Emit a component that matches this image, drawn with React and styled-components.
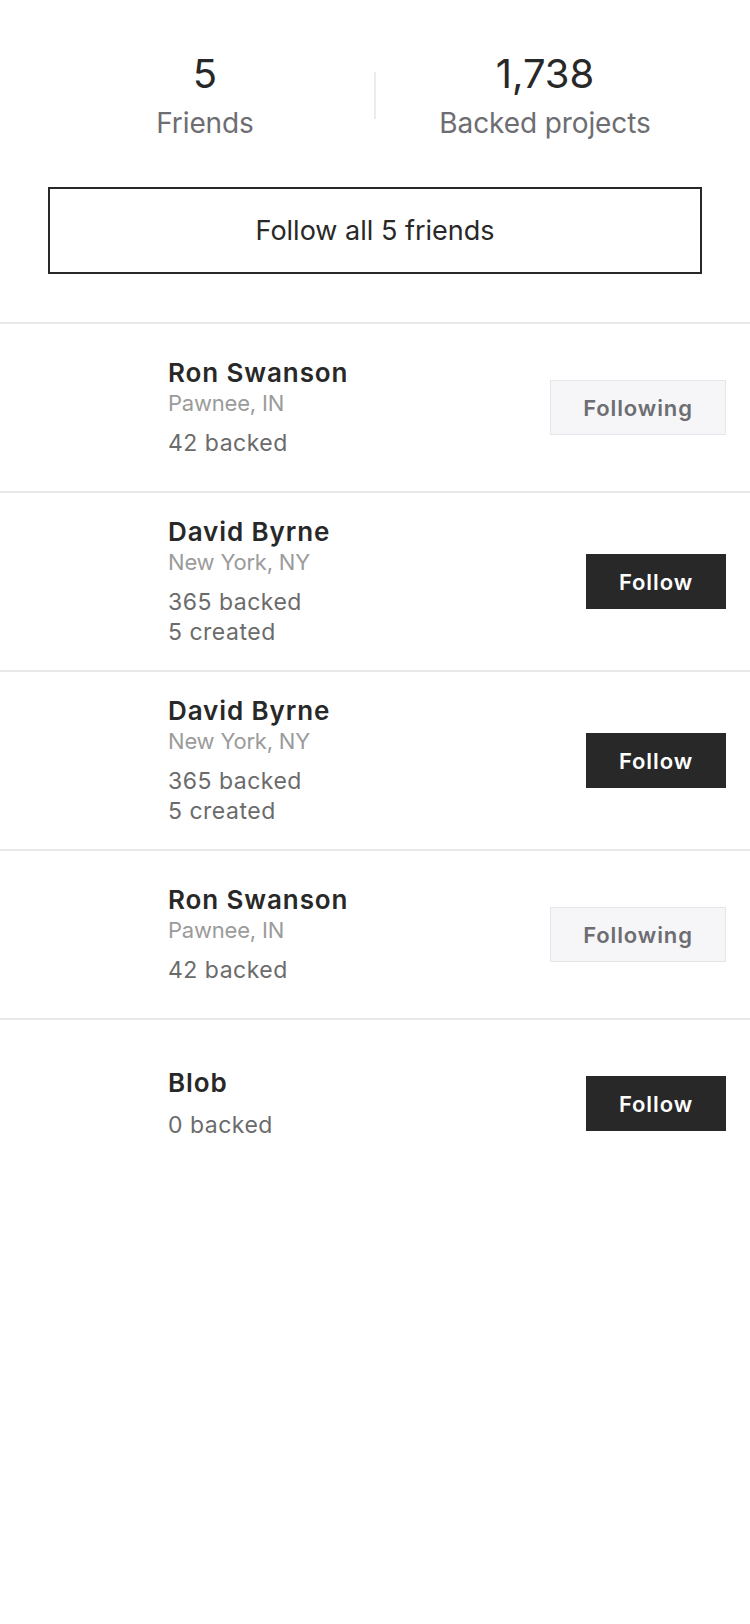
import React from 'react';
import styled, { createGlobalStyle } from 'styled-components';

const GlobalStyle = createGlobalStyle`
  html, body {
    margin: 0;
    padding: 0;
    background: #ffffff;
  }
  body {
    font-family: Inter, "Noto Sans", "Liberation Sans", sans-serif;
    -webkit-font-smoothing: antialiased;
  }
`;

const Page = styled.div`
  width: 750px;
  min-height: 1624px;
  background: #ffffff;
`;

const Header = styled.div`
  padding: 50px 48px 48px;
  border-bottom: 2px solid #e8e8e8;
`;

const StatsRow = styled.div`
  display: flex;
  align-items: center;
  margin: 0 -12px;
`;

const Stat = styled.div`
  flex: 1;
  display: flex;
  flex-direction: column;
  align-items: center;
`;

const StatNumber = styled.div`
  font-size: 40px;
  line-height: 48px;
  font-weight: 400;
  color: #282828;
`;

const StatLabel = styled.div`
  margin-top: 8px;
  font-size: 28px;
  line-height: 34px;
  letter-spacing: -0.1px;
  color: #6d6d72;
`;

const Divider = styled.div`
  width: 2px;
  height: 47px;
  background: #ececec;
`;

const FollowAllButton = styled.button`
  display: block;
  width: 100%;
  height: 87px;
  margin-top: 47px;
  background: #ffffff;
  border: 2px solid #282828;
  font-family: inherit;
  font-size: 27px;
  color: #282828;
  cursor: pointer;
`;

const Row = styled.div`
  display: flex;
  align-items: center;
  min-height: 121px;
  padding: 23px 24px;
  border-bottom: ${props => (props.last ? 'none' : '2px solid #e8e8e8')};
`;

const AvatarSlot = styled.div`
  width: 120px;
  align-self: stretch;
  margin-right: 24px;
  flex-shrink: 0;
`;

const Info = styled.div`
  flex: 1;
  display: flex;
  flex-direction: column;
`;

const Name = styled.div`
  font-size: 26px;
  line-height: 32px;
  font-weight: 600;
  letter-spacing: 0.9px;
  color: #282828;
`;

const Location = styled.div`
  font-size: 22px;
  line-height: 28px;
  letter-spacing: -0.2px;
  color: #9b9b9b;
`;

const Counts = styled.div`
  margin-top: 11px;
  font-size: 23px;
  line-height: 30px;
  letter-spacing: 0.5px;
  color: #6b6b6b;
`;

const FollowButton = styled.button`
  flex-shrink: 0;
  height: 55px;
  width: ${props => (props.following ? '176px' : '140px')};
  background: ${props => (props.following ? '#f6f6f8' : '#282828')};
  border: ${props => (props.following ? '1px solid #e6e6ea' : 'none')};
  color: ${props => (props.following ? '#6d6d72' : '#ffffff')};
  font-family: inherit;
  font-size: 22px;
  font-weight: 600;
  letter-spacing: 0.9px;
  cursor: pointer;
`;

const friends = [
  { name: 'Ron Swanson', location: 'Pawnee, IN', backed: 42, following: true },
  { name: 'David Byrne', location: 'New York, NY', backed: 365, created: 5 },
  { name: 'David Byrne', location: 'New York, NY', backed: 365, created: 5 },
  { name: 'Ron Swanson', location: 'Pawnee, IN', backed: 42, following: true },
  { name: 'Blob', backed: 0 },
];

const FriendRow = ({ friend, last }) => (
  <Row last={last}>
    <AvatarSlot />
    <Info>
      <Name>{friend.name}</Name>
      {friend.location && <Location>{friend.location}</Location>}
      <Counts>
        <div>{friend.backed} backed</div>
        {friend.created && <div>{friend.created} created</div>}
      </Counts>
    </Info>
    <FollowButton following={friend.following}>
      {friend.following ? 'Following' : 'Follow'}
    </FollowButton>
  </Row>
);

export default function App() {
  return (
    <Page>
      <GlobalStyle />
      <Header>
        <StatsRow>
          <Stat>
            <StatNumber>5</StatNumber>
            <StatLabel>Friends</StatLabel>
          </Stat>
          <Divider />
          <Stat>
            <StatNumber>1,738</StatNumber>
            <StatLabel>Backed projects</StatLabel>
          </Stat>
        </StatsRow>
        <FollowAllButton>Follow all 5 friends</FollowAllButton>
      </Header>
      {friends.map((f, i) => (
        <FriendRow key={i} friend={f} last={i === friends.length - 1} />
      ))}
    </Page>
  );
}
